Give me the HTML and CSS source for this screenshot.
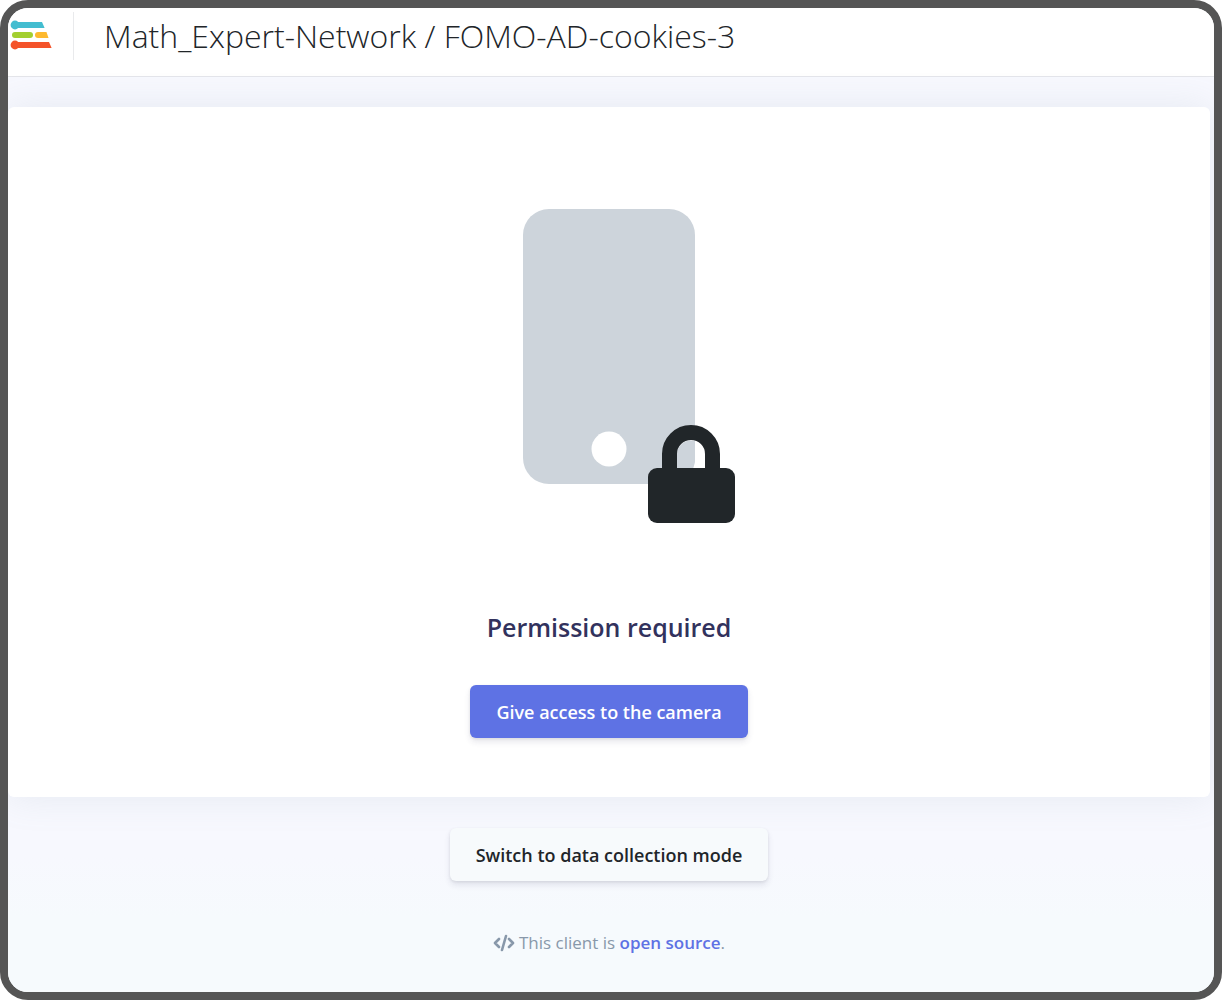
FILE: index.html
```html
<!DOCTYPE html>
<html lang="en">
<head>
<meta charset="utf-8">
<meta name="viewport" content="width=device-width, initial-scale=1">
<title>Math_Expert-Network / FOMO-AD-cookies-3</title>
<link rel="stylesheet" href="styles.css">
</head>
<body>
<div class="frame">
  <header class="topbar">
    <svg class="logo" viewBox="0 0 42 30" aria-hidden="true">
      <g fill="#43bdd0"><circle cx="5" cy="5" r="4.4"/><path d="M5 2h27l2.600 6H5z"/></g>
      <rect x="2" y="12" width="21" height="6" rx="3" fill="#a3cf30"/>
      <path d="M28 12h8.500l2 6H28a3 3 0 0 1 0-6z" fill="#fdb92f"/>
      <g fill="#f4532a"><circle cx="5" cy="25" r="4.400"/><path d="M5 22h34l2.600 6H5z"/></g>
    </svg>
    <h1 class="title">Math_Expert-Network / FOMO-AD-cookies-3</h1>
  </header>
  <main class="content">
    <section class="card">
      <svg class="device" viewBox="0 0 252 314" aria-hidden="true">
        <rect x="40" width="172" height="275" rx="26" fill="#cdd4db"/>
        <circle cx="126" cy="240" r="17.500" fill="#fff"/>
        <path d="M194 262v-17a14 14 0 0 1 28 0v17z" fill="#fff"/>
        <path d="M194 262v-17a14 14 0 0 1 18-13v21q-1 5-3 9z" fill="#cdd4db"/>
        <path d="M186.500 262v-17a21.500 21.500 0 0 1 43 0v17" fill="none" stroke="#212629" stroke-width="15"/>
        <rect x="165" y="259" width="87" height="55" rx="9" fill="#212629"/>
      </svg>
      <h2 class="heading">Permission required</h2>
      <button class="btn btn-primary" type="button">Give access to the camera</button>
    </section>
    <button class="btn btn-secondary" type="button">Switch to data collection mode</button>
    <p class="note">
      <svg class="code" viewBox="0 0 22 18" fill="none" stroke="currentColor" stroke-width="2.600" stroke-linecap="round" stroke-linejoin="round" aria-hidden="true"><path d="M6 5L2 9l4 4M16 5l4 4-4 4M13 2L9 16"/></svg>
      <span>This client is <a class="link" href="#">open source</a>.</span>
    </p>
  </main>
</div>
</body>
</html>
```
FILE: styles.css
```css
* { box-sizing: border-box; }

body {
  margin: 0;
  background: #fff;
  font-family: "Open Sans", "Noto Sans", sans-serif;
}

.frame {
  display: flex;
  flex-direction: column;
  min-height: 100vh;
  border: 8px solid #555;
  border-radius: 28px;
  background: #f6fafd;
  overflow: hidden;
}

.topbar {
  display: flex;
  align-items: flex-start;
  gap: 21px;
  min-height: 69px;
  padding: 4px 2px;
  border-bottom: 1px solid #e4e5ea;
  background: #fff;
}

.logo {
  width: 42px;
  height: 30px;
  margin-top: 8px;
}

.title {
  margin: 0;
  padding-left: 30px;
  border-left: 1px solid #e9eaec;
  color: #212529;
  font-size: 32px;
  font-weight: 300;
  line-height: 48px;
}

.content {
  display: flex;
  flex: 1;
  flex-direction: column;
  align-items: center;
  padding: 30px 4px 36px 0;
  background: linear-gradient(#f7f8fe 0, #f7f8fe 780px, #f6fafd 840px);
}

.card {
  display: flex;
  flex-direction: column;
  align-items: center;
  width: 100%;
  padding: 102px 24px 59px;
  border-radius: 6px;
  background: #fff;
  box-shadow: 0 0 36px rgba(136, 152, 170, 0.15);
}

.device {
  width: 252px;
  height: 314px;
}

.heading {
  margin: 86px 0 40px;
  color: #32325d;
  font-size: 25px;
  font-weight: 600;
  line-height: 36px;
}

.btn {
  height: 53px;
  padding: 0 26px;
  border: 0;
  border-radius: 6px;
  font: 600 18px/26px "Open Sans", "Noto Sans", sans-serif;
  box-shadow: 0 4px 6px rgba(50, 50, 93, 0.11), 0 1px 3px rgba(0, 0, 0, 0.08);
}

.btn-primary {
  background: #5e72e4;
  color: #fff;
}

.btn-secondary {
  margin-top: 31px;
  background: #f7fafc;
  color: #212529;
}

.note {
  display: flex;
  align-items: center;
  gap: 4px;
  margin: 49px 0 0;
  color: #8898aa;
  font-size: 17px;
  line-height: 26px;
}

.code {
  width: 22px;
  height: 18px;
}

.link {
  color: #5e72e4;
  font-weight: 600;
  text-decoration: none;
}
```
